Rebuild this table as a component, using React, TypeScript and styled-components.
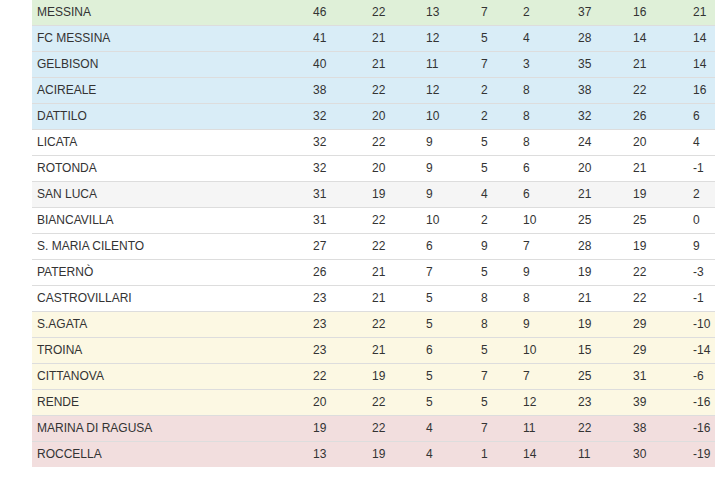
import React from 'react';
import styled, { createGlobalStyle } from 'styled-components';

type Zone = 'success' | 'info' | 'plain' | 'active' | 'warning' | 'danger';

interface Team {
  name: string;
  stats: number[];
  zone: Zone;
}

const teams: Team[] = [
  { name: 'MESSINA', stats: [46, 22, 13, 7, 2, 37, 16, 21], zone: 'success' },
  { name: 'FC MESSINA', stats: [41, 21, 12, 5, 4, 28, 14, 14], zone: 'info' },
  { name: 'GELBISON', stats: [40, 21, 11, 7, 3, 35, 21, 14], zone: 'info' },
  { name: 'ACIREALE', stats: [38, 22, 12, 2, 8, 38, 22, 16], zone: 'info' },
  { name: 'DATTILO', stats: [32, 20, 10, 2, 8, 32, 26, 6], zone: 'info' },
  { name: 'LICATA', stats: [32, 22, 9, 5, 8, 24, 20, 4], zone: 'plain' },
  { name: 'ROTONDA', stats: [32, 20, 9, 5, 6, 20, 21, -1], zone: 'plain' },
  { name: 'SAN LUCA', stats: [31, 19, 9, 4, 6, 21, 19, 2], zone: 'active' },
  { name: 'BIANCAVILLA', stats: [31, 22, 10, 2, 10, 25, 25, 0], zone: 'plain' },
  { name: 'S. MARIA CILENTO', stats: [27, 22, 6, 9, 7, 28, 19, 9], zone: 'plain' },
  { name: 'PATERNÒ', stats: [26, 21, 7, 5, 9, 19, 22, -3], zone: 'plain' },
  { name: 'CASTROVILLARI', stats: [23, 21, 5, 8, 8, 21, 22, -1], zone: 'plain' },
  { name: 'S.AGATA', stats: [23, 22, 5, 8, 9, 19, 29, -10], zone: 'warning' },
  { name: 'TROINA', stats: [23, 21, 6, 5, 10, 15, 29, -14], zone: 'warning' },
  { name: 'CITTANOVA', stats: [22, 19, 5, 7, 7, 25, 31, -6], zone: 'warning' },
  { name: 'RENDE', stats: [20, 22, 5, 5, 12, 23, 39, -16], zone: 'warning' },
  { name: 'MARINA DI RAGUSA', stats: [19, 22, 4, 7, 11, 22, 38, -16], zone: 'danger' },
  { name: 'ROCCELLA', stats: [13, 19, 4, 1, 14, 11, 30, -19], zone: 'danger' },
];

// name, pts, g, v, n, p, gf, gs, dr
const colWidths = [276, 59, 54, 55, 42, 55, 55, 60, 45];

const zoneColors: Record<Zone, string> = {
  success: '#dff0d8',
  info: '#d9edf7',
  plain: '#ffffff',
  active: '#f5f5f5',
  warning: '#fcf8e3',
  danger: '#f2dede',
};

const GlobalStyle = createGlobalStyle`
  html, body {
    margin: 0;
    padding: 0;
    background: #fff;
    overflow: hidden;
  }
  body {
    font-family: 'Liberation Sans', Arial, sans-serif;
    color: #333;
  }
`;

const Page = styled.div`
  margin-top: -1px;
  padding-left: 32px;
  width: 725px;
`;

const Table = styled.table`
  width: 701px;
  table-layout: fixed;
  border-collapse: collapse;
  border-spacing: 0;
  font-size: 12px;
`;

const Row = styled.tr<{ $zone: Zone }>`
  background: ${(p) => zoneColors[p.$zone]};
`;

const Cell = styled.td`
  padding: 4px 5px;
  height: 17px;
  line-height: 17px;
  border-top: 1px solid #ddd;
  text-align: left;
  vertical-align: middle;
  white-space: nowrap;
  overflow: hidden;
`;

const App: React.FC = () => {
  return (
    <>
      <GlobalStyle />
      <Page>
        <Table>
          <colgroup>
            {colWidths.map((w, i) => (
              <col key={i} style={{ width: w }} />
            ))}
          </colgroup>
          <tbody>
            {teams.map((team) => {
              return (
                <Row key={team.name} $zone={team.zone}>
                  <Cell>{team.name}</Cell>
                  {team.stats.map((s, i) => (
                    <Cell key={i}>{s}</Cell>
                  ))}
                </Row>
              );
            })}
          </tbody>
        </Table>
      </Page>
    </>
  );
};

export default App;
